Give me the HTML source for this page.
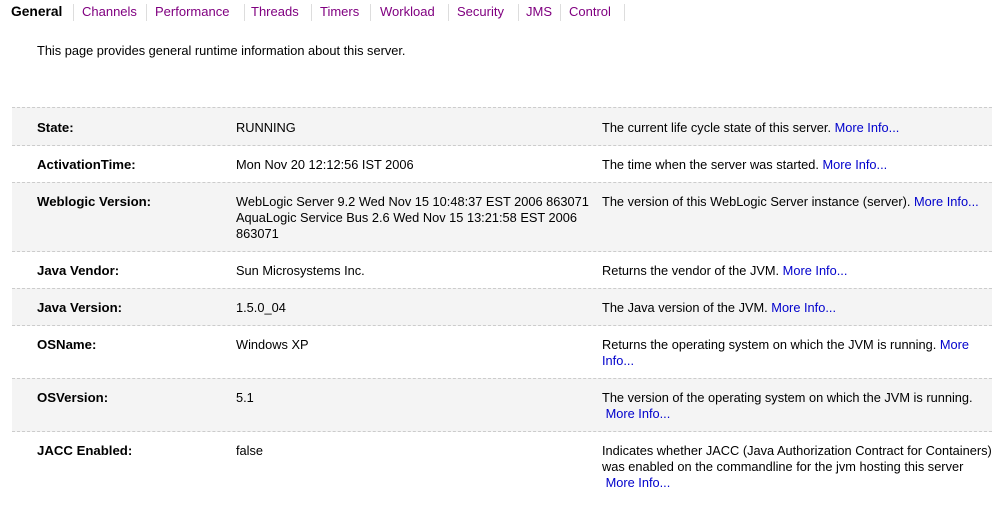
<!DOCTYPE html>
<html><head><style>
body{margin:0;width:992px;height:529px;background:#fff;font-family:"Liberation Sans",sans-serif;font-size:13px;color:#000;position:relative;overflow:hidden}
.t{position:absolute;top:4px;font-size:13px;color:#800080;white-space:nowrap;line-height:16px}
.s{position:absolute;top:4px;width:1px;height:17px;background:#ddd}
.r{position:absolute;left:12px;width:980px;border-top:1px dashed #ccc}
.g{background:#f4f4f4}
.c{position:absolute;line-height:16px;white-space:nowrap}
.l{left:25px;font-weight:bold;font-size:13.2px}
.v{left:224px;font-size:12.8px}
.d{left:590px;font-size:12.8px}
a{color:#0000cc;text-decoration:none}
</style></head><body>
<div class="t" style="left:11px;color:#000;font-weight:bold;font-size:13.8px">General</div><div class="s" style="left:73px"></div>
<div class="t" style="left:82px">Channels</div><div class="s" style="left:146px"></div>
<div class="t" style="left:155px">Performance</div><div class="s" style="left:244px"></div>
<div class="t" style="left:251px">Threads</div><div class="s" style="left:311px"></div>
<div class="t" style="left:320px">Timers</div><div class="s" style="left:370px"></div>
<div class="t" style="left:380px">Workload</div><div class="s" style="left:448px"></div>
<div class="t" style="left:457px">Security</div><div class="s" style="left:518px"></div>
<div class="t" style="left:526px">JMS</div><div class="s" style="left:560px"></div>
<div class="t" style="left:569px">Control</div><div class="s" style="left:624px"></div>
<div class="c" style="left:37px;top:43px;font-size:12.8px">This page provides general runtime information about this server.</div>

<div class="r g" style="top:107px;height:38px"><div class="c l" style="top:12px">State:</div><div class="c v" style="top:12px">RUNNING</div><div class="c d" style="top:12px">The current life cycle state of this server. <a>More Info...</a></div></div>
<div class="r" style="top:145px;height:37px"><div class="c l" style="top:11px">ActivationTime:</div><div class="c v" style="top:11px">Mon Nov 20 12:12:56 IST 2006</div><div class="c d" style="top:11px">The time when the server was started. <a>More Info...</a></div></div>
<div class="r g" style="top:182px;height:69px"><div class="c l" style="top:11px">Weblogic Version:</div><div class="c v" style="top:11px">WebLogic Server 9.2 Wed Nov 15 10:48:37 EST 2006 863071<br>AquaLogic Service Bus 2.6 Wed Nov 15 13:21:58 EST 2006<br>863071</div><div class="c d" style="top:11px">The version of this WebLogic Server instance (server). <a>More Info...</a></div></div>
<div class="r" style="top:251px;height:37px"><div class="c l" style="top:11px">Java Vendor:</div><div class="c v" style="top:11px">Sun Microsystems Inc.</div><div class="c d" style="top:11px">Returns the vendor of the JVM. <a>More Info...</a></div></div>
<div class="r g" style="top:288px;height:37px"><div class="c l" style="top:11px">Java Version:</div><div class="c v" style="top:11px">1.5.0_04</div><div class="c d" style="top:11px">The Java version of the JVM. <a>More Info...</a></div></div>
<div class="r" style="top:325px;height:53px"><div class="c l" style="top:11px">OSName:</div><div class="c v" style="top:11px">Windows XP</div><div class="c d" style="top:11px">Returns the operating system on which the JVM is running. <a>More</a><br><a>Info...</a></div></div>
<div class="r g" style="top:378px;height:53px"><div class="c l" style="top:11px">OSVersion:</div><div class="c v" style="top:11px">5.1</div><div class="c d" style="top:11px">The version of the operating system on which the JVM is running.<br>&nbsp;<a>More Info...</a></div></div>
<div class="r" style="top:431px;height:70px"><div class="c l" style="top:11px">JACC Enabled:</div><div class="c v" style="top:11px">false</div><div class="c d" style="top:11px">Indicates whether JACC (Java Authorization Contract for Containers)<br>was enabled on the commandline for the jvm hosting this server<br>&nbsp;<a>More Info...</a></div></div>
</body></html>
